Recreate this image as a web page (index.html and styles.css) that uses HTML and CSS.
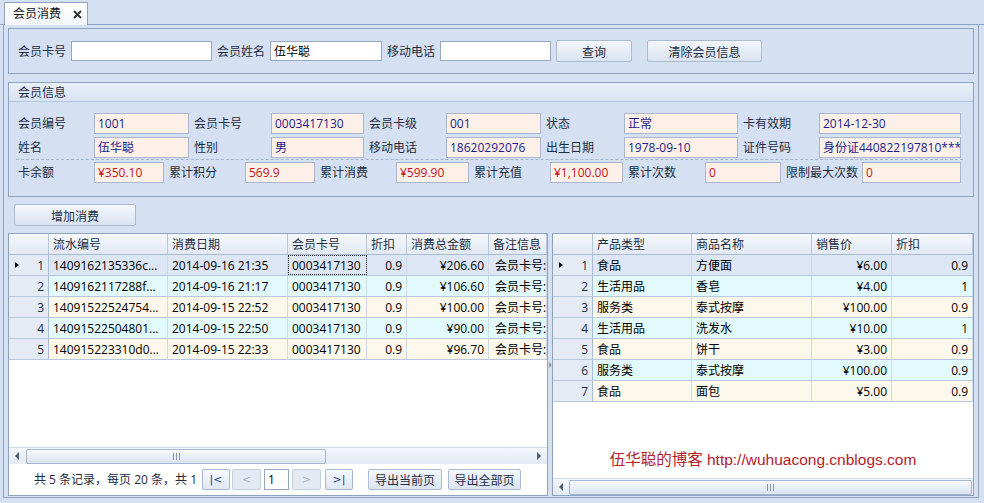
FILE: index.html
```html
<!DOCTYPE html>
<html lang="zh-CN">
<head>
<meta charset="utf-8">
<title>会员消费</title>
<link rel="stylesheet" href="styles.css">
</head>
<body>
<div class="tabstrip">
  <div class="tab"><span>会员消费</span><span class="close"><svg width="9" height="9" viewBox="0 0 9 9"><path d="M1 1L8 8M8 1L1 8" stroke="#333" stroke-width="1.8" fill="none"/></svg></span></div>
</div>
<div class="frame">
  <div class="search">
    <span class="lbl">会员卡号</span><div class="in w141"></div>
    <span class="lbl">会员姓名</span><div class="in w112">伍华聪</div>
    <span class="lbl">移动电话</span><div class="in w111"></div>
    <div class="btn b-query">查询</div>
    <div class="btn b-clear">清除会员信息</div>
  </div>

  <div class="group">
    <div class="group-hd">会员信息</div>
    <div class="info">
      <div class="irow a">
        <span class="ilbl first">会员编号</span><div class="ival">1001</div>
        <span class="ilbl">会员卡号</span><div class="ival">0003417130</div>
        <span class="ilbl">会员卡级</span><div class="ival">001</div>
        <span class="ilbl">状态</span><div class="ival">正常</div>
        <span class="ilbl">卡有效期</span><div class="ival">2014-12-30</div>
      </div>
      <div class="irow a">
        <span class="ilbl first">姓名</span><div class="ival">伍华聪</div>
        <span class="ilbl">性别</span><div class="ival">男</div>
        <span class="ilbl">移动电话</span><div class="ival">18620292076</div>
        <span class="ilbl">出生日期</span><div class="ival">1978-09-10</div>
        <span class="ilbl">证件号码</span><div class="ival">身份证440822197810***</div>
      </div>
      <div class="sep"></div>
      <div class="irow b">
        <span class="ilbl first">卡余额</span><div class="ival red">¥350.10</div>
        <span class="ilbl">累计积分</span><div class="ival red">569.9</div>
        <span class="ilbl">累计消费</span><div class="ival red">¥599.90</div>
        <span class="ilbl">累计充值</span><div class="ival red">¥1,100.00</div>
        <span class="ilbl">累计次数</span><div class="ival red">0</div>
        <span class="ilbl">限制最大次数</span><div class="ival red">0</div>
      </div>
    </div>
  </div>

  <div class="toolbar"><div class="btn b-add">增加消费</div></div>

  <div class="split">
    <div class="lpanel">
      <div class="gh lg">
        <div class="rh"></div><div>流水编号</div><div>消费日期</div><div>会员卡号</div><div>折扣</div><div>消费总金额</div><div>备注信息</div>
      </div>
      <div class="gr lg sel">
        <div class="rh"><i class="cur"></i><span>1</span></div><div>1409162135336c...</div><div>2014-09-16 21:35</div><div class="focus">0003417130</div><div class="num">0.9</div><div class="num">¥206.60</div><div class="rem">会员卡号:</div>
      </div>
      <div class="gr lg alt1">
        <div class="rh"><span>2</span></div><div>1409162117288f...</div><div>2014-09-16 21:17</div><div>0003417130</div><div class="num">0.9</div><div class="num">¥106.60</div><div class="rem">会员卡号:</div>
      </div>
      <div class="gr lg alt2">
        <div class="rh"><span>3</span></div><div>14091522524754...</div><div>2014-09-15 22:52</div><div>0003417130</div><div class="num">0.9</div><div class="num">¥100.00</div><div class="rem">会员卡号:</div>
      </div>
      <div class="gr lg alt1">
        <div class="rh"><span>4</span></div><div>14091522504801...</div><div>2014-09-15 22:50</div><div>0003417130</div><div class="num">0.9</div><div class="num">¥90.00</div><div class="rem">会员卡号:</div>
      </div>
      <div class="gr lg alt2">
        <div class="rh"><span>5</span></div><div>140915223310d0...</div><div>2014-09-15 22:33</div><div>0003417130</div><div class="num">0.9</div><div class="num">¥96.70</div><div class="rem">会员卡号:</div>
      </div>
      <div class="gbody"></div>
      <div class="hs">
        <div class="arr"><i class="tl"></i></div>
        <div class="thumb tl-thumb"><span class="grip"></span></div>
        <div class="track"></div>
        <div class="arr"><i class="tr"></i></div>
      </div>
      <div class="pager">
        <div class="ptext">共 5 条记录，每页 20 条，共 1</div>
        <div class="pb first-pb">|&lt;</div>
        <div class="pb dis">&lt;</div>
        <div class="pgin">1</div>
        <div class="pb dis">&gt;</div>
        <div class="pb last-pb">&gt;|</div>
        <div class="btn b-exp1">导出当前页</div>
        <div class="btn b-exp2">导出全部页</div>
      </div>
    </div>

    <div class="splitter"><i></i></div>

    <div class="rpanel">
      <div class="gh rg">
        <div class="rh"></div><div>产品类型</div><div>商品名称</div><div>销售价</div><div>折扣</div>
      </div>
      <div class="gr rg sel"><div class="rh"><i class="cur"></i><span>1</span></div><div>食品</div><div>方便面</div><div class="num">¥6.00</div><div class="num">0.9</div></div>
      <div class="gr rg alt1"><div class="rh"><span>2</span></div><div>生活用品</div><div>香皂</div><div class="num">¥4.00</div><div class="num">1</div></div>
      <div class="gr rg alt2"><div class="rh"><span>3</span></div><div>服务类</div><div>泰式按摩</div><div class="num">¥100.00</div><div class="num">0.9</div></div>
      <div class="gr rg alt1"><div class="rh"><span>4</span></div><div>生活用品</div><div>洗发水</div><div class="num">¥10.00</div><div class="num">1</div></div>
      <div class="gr rg alt2"><div class="rh"><span>5</span></div><div>食品</div><div>饼干</div><div class="num">¥3.00</div><div class="num">0.9</div></div>
      <div class="gr rg alt1"><div class="rh"><span>6</span></div><div>服务类</div><div>泰式按摩</div><div class="num">¥100.00</div><div class="num">0.9</div></div>
      <div class="gr rg alt2"><div class="rh"><span>7</span></div><div>食品</div><div>面包</div><div class="num">¥5.00</div><div class="num">0.9</div></div>
      <div class="gbody wmwrap"><span class="wm">伍华聪的博客 http://wuhuacong.cnblogs.com</span></div>
      <div class="hs">
        <div class="arr"><i class="tl"></i></div>
        <div class="thumb full"><span class="grip"></span></div>
      </div>
    </div>
  </div>
</div>
</body>
</html>
```

FILE: styles.css
```css
* { box-sizing: border-box; }
html, body { margin: 0; padding: 0; }
body {
  width: 984px; height: 503px; overflow: hidden;
  background: #d5e1f2;
  font-family: "Open Sans", "Noto Sans CJK SC", sans-serif;
  font-size: 12px; color: #1e2d42;
}

/* tab strip */
.tabstrip {
  height: 25px; border-bottom: 1px solid #8ea3c0;
  display: flex; align-items: flex-end; padding-left: 4px;
}
.tab {
  width: 84px; height: 23px; margin-bottom: -1px;
  background: linear-gradient(#ffffff, #f3f6fb);
  border: 1px solid #8ea3c0; border-bottom: none;
  display: flex; align-items: center; padding-left: 8px;
  color: #151515; line-height: 20px;
}
.tab .close { margin-left: 12px; display: flex; }

/* frame */
.frame {
  margin: 0 5px 0 3px; height: 473px;
  border: 1px solid #8ea3c0; border-top: none;
  padding: 3px 4px 0;
}

/* search panel */
.search {
  height: 46px; border: 1px solid #8ea3c0;
  display: flex; align-items: center; gap: 5px; padding-left: 9px;
}
.lbl { white-space: nowrap; line-height: 20px; padding-top: 1px; }
.in {
  height: 20px; border: 1px solid #97a8c1; background: #fff;
  padding: 1px 0 0 3px; line-height: 17px; color: #000;
}
.w141 { width: 141px; }
.w112 { width: 112px; }
.w111 { width: 111px; }

.btn {
  height: 22px; border: 1px solid #aabbd3; border-radius: 2px;
  background: linear-gradient(#f4f7fc, #d9e3f0);
  display: flex; align-items: center; justify-content: center;
  color: #1e2d42; white-space: nowrap; padding-top: 1px;
}
.b-query { width: 76px; }
.b-clear { width: 115px; margin-left: 10px; }

/* member info group */
.group { margin-top: 8px; height: 115px; border: 1px solid #8ea3c0; }
.group-hd {
  height: 19px; border-bottom: 1px solid #b4c5dd;
  background: linear-gradient(#e8eff9, #d8e3f3);
  padding: 1px 0 0 9px; line-height: 17px;
}
.info { padding: 11px 0 0 9px; }
.irow { display: grid; height: 20px; }
.irow + .irow { margin-top: 4px; }
.irow.a { grid-template-columns: 76px 95px 82px 93px 82px 95px 83px 114px 81px 142px; }
.irow.b { grid-template-columns: 76px 70px 81px 70px 81px 73px 81px 73px 82px 76px 81px 99px; }
.ilbl { line-height: 20px; padding: 1px 0 0 5px; white-space: nowrap; }
.ilbl.first { padding-left: 0; }
.ival {
  border: 1px solid #a9b8ce; background: #fdf0e9; color: #1c1c8c;
  padding: 1px 0 0 3px; line-height: 17px; overflow: hidden; white-space: nowrap;
}
.ival.red { color: #c8141c; }
.sep { margin: 2px 0 2px -2px; width: 947px; border-top: 1px dashed #a2b4ce; }

/* toolbar */
.toolbar { margin-top: 7px; padding-left: 6px; display: flex; }
.b-add { width: 122px; }

/* split area */
.split { margin-top: 7px; height: 263px; display: flex; }
.lpanel, .rpanel {
  border: 1px solid #8ea3c0; background: #fff;
  display: flex; flex-direction: column;
}
.lpanel { width: 540px; }
.rpanel { width: 422px; }
.splitter { width: 5px; display: flex; align-items: center; justify-content: center; }
.splitter i {
  width: 0; height: 0;
  border-left: 3px solid #8d9bb0;
  border-top: 3px solid transparent; border-bottom: 3px solid transparent;
}

/* grids */
.lg { grid-template-columns: 40px 119px 120px 79px 40px 82px 58px; }
.rg { grid-template-columns: 40px 99px 120px 80px 81px; }
.gh {
  display: grid; height: 21px; flex: none;
  border-bottom: 1px solid #a9bcd6;
  background: linear-gradient(#f5f8fc, #e2e9f3);
}
.gh > div {
  border-right: 1px solid #b7c7dc; padding: 1px 0 0 4px;
  line-height: 19px; white-space: nowrap; overflow: hidden;
}
.gr { display: grid; height: 21px; flex: none; border-bottom: 1px solid #b9c9dd; color: #000; }
.gr > div {
  border-right: 1px solid #cfdae8; padding: 1px 4px 0;
  line-height: 19px; white-space: nowrap; overflow: hidden;
}
.gr > .rem { padding-left: 6px; padding-right: 0; }
.gh .rh { background: linear-gradient(#f5f8fc, #e2e9f3); }
.gr .rh {
  background: #e4ebf5; border-right: 1px solid #a9bcd6;
  display: flex; align-items: center; justify-content: flex-end; position: relative;
  color: #1e2d42;
}
.cur {
  position: absolute; left: 6px; top: 7px; width: 0; height: 0;
  border-left: 4px solid #111;
  border-top: 3.5px solid transparent; border-bottom: 3.5px solid transparent;
}
.num { text-align: right; }
.sel { background: #dce6f5; }
.alt1 { background: #e3fafd; }
.alt2 { background: #fdf8ec; }
.gr > .focus { outline: 1px dotted #222; outline-offset: -1px; }
.gbody { flex: 1; }

/* scrollbars */
.hs {
  height: 17px; flex: none; display: flex; align-items: center;
  background: linear-gradient(#f3f6fb, #e4ebf5);
  border-top: 1px solid #d0dbe9;
}
.hs .arr { width: 16px; height: 100%; display: flex; align-items: center; justify-content: center; flex: none; }
.tl { width: 0; height: 0; border-right: 4px solid #4b5a6e; border-top: 4px solid transparent; border-bottom: 4px solid transparent; }
.tr { width: 0; height: 0; border-left: 4px solid #4b5a6e; border-top: 4px solid transparent; border-bottom: 4px solid transparent; }
.thumb {
  height: 15px; border: 1px solid #a6b8d1; border-radius: 2px;
  background: linear-gradient(#f8fafd, #d9e3f1);
  display: flex; align-items: center; justify-content: center;
}
.tl-thumb { width: 300px; margin-left: 1px; }
.thumb.full { flex: 1; margin-right: 1px; }
.track { flex: 1; }
.grip {
  width: 7px; height: 7px;
  background: repeating-linear-gradient(90deg, #8796ab 0 1px, transparent 1px 3px);
}

/* pager */
.pager { height: 31px; flex: none; display: flex; align-items: center; padding-left: 25px; }
.ptext { width: 166px; overflow: hidden; white-space: nowrap; line-height: 20px; padding-top: 1px; color: #1e2d42; }
.pb {
  width: 28px; height: 21px; margin-left: 2px;
  border: 1px solid #a5b6cf; border-radius: 2px;
  background: linear-gradient(#f7f9fd, #dfe7f2);
  color: #1d3f8e; display: flex; align-items: center; justify-content: center;
  font-family: "DejaVu Sans", sans-serif; font-size: 11px;
}
.pb.dis { width: 29px; background: #e3eaf3; border-color: #c4cfde; color: #a3b0c0; }
.pgin {
  width: 25px; height: 21px; margin-left: 3px;
  border: 1px solid #97a8c1; background: #fff; padding-left: 3px;
  line-height: 19px; color: #000;
}
.pgin + .pb { margin-left: 3px; }
.last-pb { margin-left: 4px; }
.b-exp1 { width: 74px; height: 21px; margin-left: 15px; }
.b-exp2 { width: 73px; height: 21px; margin-left: 6px; }

/* watermark */
.wmwrap { display: flex; align-items: flex-end; justify-content: center; padding-bottom: 8px; }
.wm {
  color: #b3222b; font-size: 15.5px; line-height: 20px;
  font-family: "Liberation Sans", "Noto Sans CJK SC", sans-serif; white-space: nowrap;
}
```
